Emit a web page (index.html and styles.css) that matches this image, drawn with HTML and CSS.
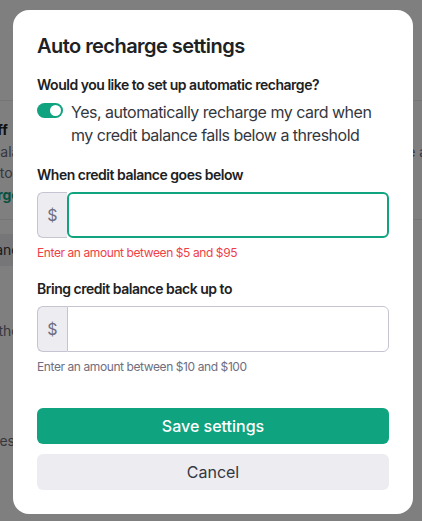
FILE: index.html
```html
<!DOCTYPE html>
<html lang="en">
  <head>
    <meta charset="UTF-8" />
    <meta name="viewport" content="width=device-width, initial-scale=1.0" />
    <title>Auto recharge settings</title>
    <link rel="stylesheet" href="styles.css">
  </head>
  <body>
    <!-- page behind the dialog -->
    <div class="page">
      <div class="page-header"></div>
      <div class="page-section">
        <div class="page-heading">Auto recharge is off</div>
        <p class="page-text">When your credit balance reaches $0, your API requests will stop working. Enable automatic recharge to keep your balance topped up.</p>
        <div class="page-link">Modify auto recharge</div>
      </div>
      <div class="page-buttons">
        <span class="page-button">Add to credit balance</span>
      </div>
      <div class="page-section plain">
        <div class="page-heading">Payment methods</div>
        <p class="page-text">Add a payment method to purchase credits and more</p>
      </div>
      <p class="page-text note">You can find invoices and payment history in the billing tab or add l</p>
    </div>

    <!-- dialog -->
    <div class="overlay">
      <div class="modal">
        <h2 class="modal-title">Auto recharge settings</h2>

        <div class="field">
          <div class="field-label">Would you like to set up automatic recharge?</div>
          <label class="toggle-row">
            <span class="toggle"><span class="knob"></span></span>
            <span class="toggle-text">Yes, automatically recharge my card when my credit balance falls below a threshold</span>
          </label>
        </div>

        <div class="field">
          <div class="field-label">When credit balance goes below</div>
          <div class="input-group focused">
            <span class="prefix">$</span>
            <input class="amount" type="text" />
          </div>
          <div class="hint error">Enter an amount between $5 and $95</div>
        </div>

        <div class="field">
          <div class="field-label">Bring credit balance back up to</div>
          <div class="input-group">
            <span class="prefix">$</span>
            <input class="amount" type="text" />
          </div>
          <div class="hint">Enter an amount between $10 and $100</div>
        </div>

        <div class="actions">
          <button class="btn btn-primary">Save settings</button>
          <button class="btn btn-secondary">Cancel</button>
        </div>
      </div>
    </div>
  </body>
</html>
```

FILE: styles.css
```css
body {
  margin: 0;
  background-color: white;
  color: #202123;
  font-family: Inter, "Liberation Sans", sans-serif;
  overflow: hidden;
}

/* background page */
.page {
  margin-left: -126px;
  width: 700px;
}
.page-header {
  height: 100px;
  border-bottom: 1px solid #ececf1;
}
.page-section {
  padding: 18px 0 12px;
  border-bottom: 1px solid #ececf1;
}
.page-section.plain {
  border-bottom: none;
  padding-top: 32px;
}
.page-heading {
  font-size: 14px;
  font-weight: 700;
  line-height: 22px;
  letter-spacing: -0.05px;
}
.page-text {
  margin: 0;
  font-size: 14px;
  line-height: 21px;
  color: #6e6e80;
}
.page-text.note {
  margin-top: 77px;
}
.page-link {
  font-size: 14px;
  font-weight: 700;
  line-height: 24px;
  color: #10a37f;
  letter-spacing: -0.05px;
}
.page-buttons {
  padding-top: 14px;
}
.page-button {
  display: inline-block;
  padding: 6px 12px;
  border-radius: 6px;
  background-color: #ececf1;
  font-size: 14px;
  line-height: 20px;
  color: #353740;
}

/* dialog */
.overlay {
  position: fixed;
  inset: 0;
  background-color: rgba(0, 0, 0, 0.5);
}
.modal {
  margin: 10px 0 0 13px;
  width: 400px;
  box-sizing: border-box;
  padding: 24px;
  background-color: white;
  border-radius: 16px;
}
.modal-title {
  margin: 0 0 17px;
  font-size: 20px;
  font-weight: 600;
  line-height: 24px;
  letter-spacing: -0.55px;
}
.field {
  margin-bottom: 18px;
}
.field-label {
  font-size: 14px;
  font-weight: 600;
  line-height: 20px;
  letter-spacing: -0.48px;
  margin-bottom: 7px;
}
.field:first-of-type .field-label {
  margin-bottom: 6px;
}
.toggle-row {
  display: flex;
  align-items: flex-start;
  gap: 8px;
}
.toggle {
  flex: none;
  margin-top: 2px;
  width: 26px;
  height: 15px;
  border-radius: 8px;
  background-color: #10a37f;
  position: relative;
}
.knob {
  position: absolute;
  top: 2px;
  right: 2px;
  width: 11px;
  height: 11px;
  border-radius: 50%;
  background-color: white;
}
.toggle-text {
  font-size: 16px;
  line-height: 23px;
  letter-spacing: -0.5px;
  color: #353740;
}
.input-group {
  display: flex;
  height: 46px;
}
.prefix {
  display: flex;
  align-items: center;
  justify-content: center;
  width: 29px;
  border: 1px solid #c5c5d2;
  border-right: none;
  border-radius: 6px 0 0 6px;
  background-color: #ececf1;
  font-size: 16px;
  color: #6e6e80;
}
.amount {
  flex: 1;
  min-width: 0;
  margin: 0;
  border: 1px solid #c5c5d2;
  border-radius: 0 6px 6px 0;
  outline: none;
  font-size: 16px;
}
.focused .amount {
  border: 2px solid #10a37f;
  border-radius: 6px;
}
.hint {
  margin-top: 7px;
  font-size: 12px;
  line-height: 16px;
  letter-spacing: -0.41px;
  color: #6e6e80;
}
.hint.error {
  color: #ef4146;
}
.actions {
  display: flex;
  flex-direction: column;
  gap: 10px;
  margin-top: 33px;
}
.btn {
  height: 36px;
  border: none;
  border-radius: 6px;
  font-family: inherit;
  font-size: 16px;
  cursor: pointer;
}
.btn-primary {
  background-color: #10a37f;
  color: white;
  font-weight: 500;
}
.btn-secondary {
  background-color: #ececf1;
  color: #353740;
}
```
